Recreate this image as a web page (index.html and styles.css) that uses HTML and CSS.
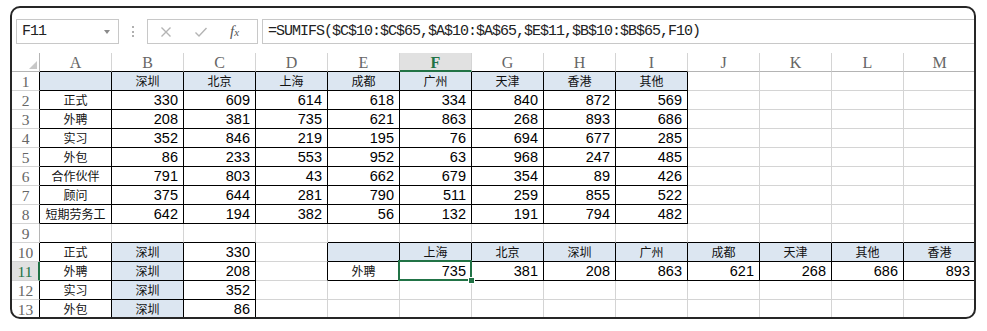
FILE: index.html
```html
<!DOCTYPE html>
<html lang="zh-CN">
<head>
    <meta charset="UTF-8">
    <meta name="viewport" content="width=device-width, initial-scale=1.0">
    <title>SUMIFS - 工作表</title>
    <link rel="stylesheet" href="styles.css">
</head>
<body>

<div class="frame">

    <!-- 编辑栏 -->
    <div class="fbar">
        <div class="namebox"><span>F11</span><span class="drop"></span></div>
        <div class="grip"></div>
        <div class="fbtns">
            <svg class="ico" width="12" height="12" viewBox="0 0 12 12"><path d="M1.5 1.5 L10.5 10.5 M10.5 1.5 L1.5 10.5" stroke="#b4b4b4" stroke-width="1.4" fill="none"/></svg>
            <svg class="ico" width="14" height="12" viewBox="0 0 14 12"><path d="M1.5 6.5 L5 10 L12.5 2" stroke="#b4b4b4" stroke-width="1.4" fill="none"/></svg>
            <span class="fx"><i>f</i><i class="sx">x</i></span>
        </div>
        <div class="finput">=SUMIFS($C$10:$C$65,$A$10:$A$65,$E$11,$B$10:$B$65,F10)</div>
    </div>

    <!-- 工作表 -->
    <div class="sheet">
        <!-- 列标 -->
        <div class="corner"><i></i></div>
        <div class="ch kb">A</div><div class="ch kb">B</div><div class="ch kb">C</div><div class="ch kb">D</div>
        <div class="ch kb">E</div><div class="ch cur">F</div><div class="ch kb">G</div><div class="ch kb">H</div>
        <div class="ch kb">I</div><div class="ch">J</div><div class="ch">K</div><div class="ch">L</div><div class="ch">M</div>

        <!-- 1 -->
        <div class="rh kr">1</div>
        <div class="c k hd"></div>
        <div class="c k hd t">深圳</div><div class="c k hd t">北京</div><div class="c k hd t">上海</div><div class="c k hd t">成都</div>
        <div class="c k hd t">广州</div><div class="c k hd t">天津</div><div class="c k hd t">香港</div><div class="c k hd t">其他</div>
        <div class="c"></div><div class="c"></div><div class="c"></div><div class="c"></div>

        <!-- 2 -->
        <div class="rh kr">2</div>
        <div class="c k t">正式</div>
        <div class="c k">330</div><div class="c k">609</div><div class="c k">614</div><div class="c k">618</div>
        <div class="c k">334</div><div class="c k">840</div><div class="c k">872</div><div class="c k">569</div>
        <div class="c"></div><div class="c"></div><div class="c"></div><div class="c"></div>

        <!-- 3 -->
        <div class="rh kr">3</div>
        <div class="c k t">外聘</div>
        <div class="c k">208</div><div class="c k">381</div><div class="c k">735</div><div class="c k">621</div>
        <div class="c k">863</div><div class="c k">268</div><div class="c k">893</div><div class="c k">686</div>
        <div class="c"></div><div class="c"></div><div class="c"></div><div class="c"></div>

        <!-- 4 -->
        <div class="rh kr">4</div>
        <div class="c k t">实习</div>
        <div class="c k">352</div><div class="c k">846</div><div class="c k">219</div><div class="c k">195</div>
        <div class="c k">76</div><div class="c k">694</div><div class="c k">677</div><div class="c k">285</div>
        <div class="c"></div><div class="c"></div><div class="c"></div><div class="c"></div>

        <!-- 5 -->
        <div class="rh kr">5</div>
        <div class="c k t">外包</div>
        <div class="c k">86</div><div class="c k">233</div><div class="c k">553</div><div class="c k">952</div>
        <div class="c k">63</div><div class="c k">968</div><div class="c k">247</div><div class="c k">485</div>
        <div class="c"></div><div class="c"></div><div class="c"></div><div class="c"></div>

        <!-- 6 -->
        <div class="rh kr">6</div>
        <div class="c k t">合作伙伴</div>
        <div class="c k">791</div><div class="c k">803</div><div class="c k">43</div><div class="c k">662</div>
        <div class="c k">679</div><div class="c k">354</div><div class="c k">89</div><div class="c k">426</div>
        <div class="c"></div><div class="c"></div><div class="c"></div><div class="c"></div>

        <!-- 7 -->
        <div class="rh kr">7</div>
        <div class="c k t">顾问</div>
        <div class="c k">375</div><div class="c k">644</div><div class="c k">281</div><div class="c k">790</div>
        <div class="c k">511</div><div class="c k">259</div><div class="c k">855</div><div class="c k">522</div>
        <div class="c"></div><div class="c"></div><div class="c"></div><div class="c"></div>

        <!-- 8 -->
        <div class="rh kr">8</div>
        <div class="c k t">短期劳务工</div>
        <div class="c k">642</div><div class="c k">194</div><div class="c k">382</div><div class="c k">56</div>
        <div class="c k">132</div><div class="c k">191</div><div class="c k">794</div><div class="c k">482</div>
        <div class="c"></div><div class="c"></div><div class="c"></div><div class="c"></div>

        <!-- 9 -->
        <div class="rh">9</div>
        <div class="c kb"></div><div class="c kb"></div><div class="c kb"></div><div class="c"></div>
        <div class="c kb"></div><div class="c kb"></div><div class="c kb"></div><div class="c kb"></div>
        <div class="c kb"></div><div class="c kb"></div><div class="c kb"></div><div class="c kb"></div><div class="c kb"></div>

        <!-- 10 -->
        <div class="rh kr">10</div>
        <div class="c k t">正式</div><div class="c k hd t">深圳</div><div class="c k">330</div><div class="c kr"></div>
        <div class="c k hd"></div>
        <div class="c k hd t">上海</div><div class="c k hd t">北京</div><div class="c k hd t">深圳</div><div class="c k hd t">广州</div>
        <div class="c k hd t">成都</div><div class="c k hd t">天津</div><div class="c k hd t">其他</div><div class="c k hd t">香港</div>

        <!-- 11 -->
        <div class="rh rcur">11</div>
        <div class="c k t">外聘</div><div class="c k hd t">深圳</div><div class="c k">208</div><div class="c kr"></div>
        <div class="c k t">外聘</div>
        <div class="c k sel">735</div><div class="c k">381</div><div class="c k">208</div><div class="c k">863</div>
        <div class="c k">621</div><div class="c k">268</div><div class="c k">686</div><div class="c k">893</div>

        <!-- 12 -->
        <div class="rh kr">12</div>
        <div class="c k t">实习</div><div class="c k hd t">深圳</div><div class="c k">352</div><div class="c"></div>
        <div class="c"></div><div class="c"></div><div class="c"></div><div class="c"></div>
        <div class="c"></div><div class="c"></div><div class="c"></div><div class="c"></div><div class="c"></div>

        <!-- 13 -->
        <div class="rh kr">13</div>
        <div class="c k t">外包</div><div class="c k hd t">深圳</div><div class="c k">86</div><div class="c"></div>
        <div class="c"></div><div class="c"></div><div class="c"></div><div class="c"></div>
        <div class="c"></div><div class="c"></div><div class="c"></div><div class="c"></div><div class="c"></div>
    </div>
</div>

</body>
</html>
```

FILE: styles.css
```css
/* Marco general */
body {
    margin: 0;
    background: #fff;
    font-family: "Liberation Sans", Arial, "Noto Sans CJK SC", sans-serif;
}
.frame {
    margin: 6px 0 0 10px;
    width: 966px;
    height: 313px;
    box-sizing: border-box;
    border: 2px solid #262626;
    border-radius: 10px;
    overflow: hidden;
    background: #fff;
}

/* Barra de fórmulas */
.fbar {
    display: flex;
    align-items: center;
    height: 25px;
    margin-top: 11px;
    padding-left: 4px;
    font-family: "Liberation Mono", "Courier New", monospace;
    font-size: 15px;
    letter-spacing: -1px;
    color: #222;
}
.namebox {
    width: 103px;
    height: 25px;
    box-sizing: border-box;
    border: 1px solid #c8c8c8;
    display: flex;
    align-items: center;
    justify-content: space-between;
    padding: 0 8px 0 5px;
}
.drop {
    width: 0;
    height: 0;
    border-left: 3px solid transparent;
    border-right: 3px solid transparent;
    border-top: 4px solid #8a8a8a;
}
.grip {
    height: 11px;
    margin: 0 13px;
    border-left: 2px dotted #b0b0b0;
}
.fbtns {
    width: 111px;
    height: 25px;
    box-sizing: border-box;
    border: 1px solid #c8c8c8;
    display: flex;
    align-items: center;
    padding-left: 12px;
    gap: 22px;
}
.fx {
    font-family: "Liberation Serif", serif;
    font-size: 15px;
    color: #555;
    letter-spacing: 0;
}
.fx .sx {
    font-size: 11px;
}
.finput {
    flex: 1;
    height: 25px;
    box-sizing: border-box;
    margin-left: 4px;
    border: 1px solid #c8c8c8;
    border-right: none;
    padding-left: 5px;
    line-height: 23px;
    white-space: nowrap;
}

/* Hoja */
.sheet {
    display: grid;
    grid-template-columns: 28px repeat(13, 72px);
    grid-auto-rows: 19px;
    margin-top: 9px;
}
.sheet > div {
    box-sizing: border-box;
    border-right: 1px solid #d4d4d4;
    border-bottom: 1px solid #d4d4d4;
    white-space: nowrap;
    overflow: hidden;
}
.corner {
    display: flex;
    align-items: flex-end;
    justify-content: flex-end;
    padding: 0 2px 2px 0;
    border-right-color: #b4b4b4 !important;
    border-bottom-color: #b4b4b4 !important;
}
.corner i {
    width: 0;
    height: 0;
    border-left: 8px solid transparent;
    border-bottom: 8px solid #c8c8c8;
}
.ch, .rh {
    font-family: "Liberation Serif", "Times New Roman", serif;
    font-size: 16px;
    line-height: 19px;
    text-align: center;
    color: #666;
}
.ch {
    border-bottom-color: #b4b4b4 !important;
}
.rh {
    font-size: 15.5px;
    border-right-color: #b4b4b4 !important;
}
.c {
    font-family: "Liberation Sans Narrow", "Liberation Sans", Arial, sans-serif;
    font-size: 14.5px;
    line-height: 18px;
    text-align: right;
    padding: 0 5px;
    color: #000;
}
.t {
    font-family: "Noto Sans CJK SC", sans-serif;
    font-size: 12px;
    text-align: center;
    color: #111;
}
.hd {
    background: #dce6f1;
}

/* Bordes negros de las tablas */
.sheet > .k {
    border-right-color: #000;
    border-bottom-color: #000;
}
.sheet > .kr {
    border-right-color: #000 !important;
}
.sheet > .kb {
    border-bottom-color: #000 !important;
}

/* Celda activa */
.sheet > .cur {
    background: #e1e1e1;
    color: #217346;
    font-weight: bold;
    border-bottom: 2px solid #217346 !important;
}
.sheet > .rcur {
    background: #e1e1e1;
    color: #217346;
    border-right: 2px solid #217346 !important;
}
.sheet > .sel {
    position: relative;
    overflow: visible;
}
.sel::after {
    content: "";
    position: absolute;
    left: -2px;
    top: -2px;
    right: -1px;
    bottom: -1px;
    border: 2px solid #217346;
}
.sel::before {
    content: "";
    position: absolute;
    right: -4px;
    bottom: -4px;
    width: 5px;
    height: 5px;
    background: #217346;
    border: 1px solid #fff;
    z-index: 1;
}
```
